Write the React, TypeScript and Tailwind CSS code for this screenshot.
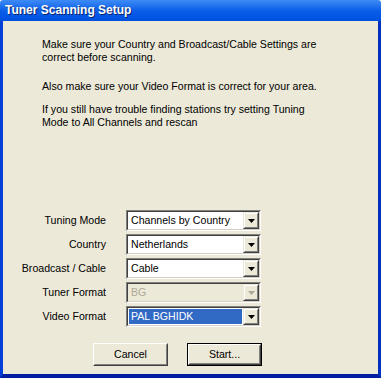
import React from 'react'

/* ─── Combo box ─────────────────────────────────────────────────────────── */

interface ComboProps {
  value: string
  disabled?: boolean
  selected?: boolean
}

function Arrow({ disabled }: { disabled?: boolean }) {
  return (
    <svg width="7" height="4" viewBox="0 0 7 4">
      <path d="M0 0H7L3.5 4Z" fill={disabled ? '#aca899' : '#000'} />
    </svg>
  )
}

function Combo({ value, disabled, selected }: ComboProps) {
  return (
    <div className="w-[135px] h-[21px] border border-t-[#808080] border-l-[#808080] border-r-white border-b-white">
      <div
        className={`h-full flex border border-t-[#404040] border-l-[#404040] border-r-[#d4d0c8] border-b-[#d4d0c8] ${disabled ? 'bg-[#ece9d8]' : 'bg-white'}`}
      >
        <div className="flex-1 flex items-center p-px">
          <div
            className={`h-full w-full flex items-center pl-[2px] ${selected ? 'bg-[#316ac5] text-white' : ''} ${disabled ? 'text-[#aca899]' : ''}`}
          >
            {value}
          </div>
        </div>
        <div className="w-[16px] h-full bg-[#ece9d8] border border-t-[#ece9d8] border-l-[#ece9d8] border-r-[#404040] border-b-[#404040]">
          <div className="h-full flex items-center justify-center border border-t-white border-l-white border-r-[#808080] border-b-[#808080]">
            <Arrow disabled={disabled} />
          </div>
        </div>
      </div>
    </div>
  )
}

/* ─── Button ────────────────────────────────────────────────────────────── */

function Button({ label, primary }: { label: string; primary?: boolean }) {
  return (
    <div className={`w-[75px] h-[23px] ${primary ? 'border border-black' : ''}`}>
      <div className="h-full border border-t-white border-l-white border-r-[#404040] border-b-[#404040]">
        <div className="h-full flex items-center justify-center bg-[#ece9d8] border border-t-[#ece9d8] border-l-[#ece9d8] border-r-[#808080] border-b-[#808080]">
          {label}
        </div>
      </div>
    </div>
  )
}

/* ─── App ───────────────────────────────────────────────────────────────── */

const ROWS: { label: string; value: string; disabled?: boolean; selected?: boolean }[] = [
  { label: 'Tuning Mode', value: 'Channels by Country' },
  { label: 'Country', value: 'Netherlands' },
  { label: 'Broadcast / Cable', value: 'Cable' },
  { label: 'Tuner Format', value: 'BG', disabled: true },
  { label: 'Video Format', value: 'PAL BGHIDK', selected: true },
]

export default function App() {
  return (
    <div
      className="w-[381px] h-[378px] flex flex-col text-[10.6px] leading-[13px] text-black"
      style={{ fontFamily: '"Liberation Sans", Arial, sans-serif' }}
    >
      {/* Title bar */}
      <div className="h-[21px] flex items-center pl-[5px] rounded-t-[3px] bg-gradient-to-b from-[#3d8bf5] via-[#0a5ee8] to-[#0050e0]">
        <span
          className="text-white font-bold text-[12px]"
          style={{ fontFamily: '"Liberation Sans", Arial, sans-serif', textShadow: '1px 1px 0 #0a246a' }}
        >
          Tuner Scanning Setup
        </span>
      </div>

      {/* Body */}
      <div className="flex-1 flex flex-col bg-[#ece9d8] border-l-[3px] border-r-[3px] border-b-[4px] border-l-[#0040d8] border-r-[#0030c0] border-b-[#001ea0]">
        <div className="pl-[39px] pt-[17px]">
          <p>Make sure your Country and Broadcast/Cable Settings are</p>
          <p>correct before scanning.</p>
          <p className="mt-[16px]">Also make sure your Video Format is correct for your area.</p>
          <p className="mt-[10px]">If you still have trouble finding stations try setting Tuning</p>
          <p>Mode to All Channels and rescan</p>
        </div>

        <div className="mt-[81px] flex flex-col gap-[3px]">
          {ROWS.map((r) => (
            <div key={r.label} className="flex items-center">
              <div className="w-[103px] text-right">{r.label}</div>
              <div className="ml-[20px]">
                <Combo value={r.value} disabled={r.disabled} selected={r.selected} />
              </div>
            </div>
          ))}
        </div>

        <div className="mt-[16px] pl-[90px] flex gap-[19px]">
          <Button label="Cancel" />
          <Button label="Start..." primary />
        </div>
      </div>
    </div>
  )
}
